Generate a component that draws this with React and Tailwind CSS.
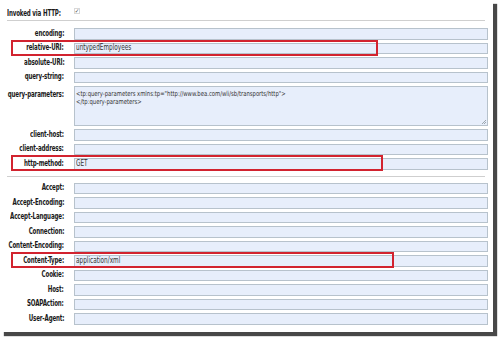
// Transport headers form: a scaled-down screenshot of an HTTP transport config page
const font = { fontFamily: '"DejaVu Sans Condensed", "Liberation Sans", sans-serif' };

const topFields = [
    { label: "encoding:" },
    { label: "relative-URI:", value: "untypedEmployees", mark: "w-[367px]" },
    { label: "absolute-URI:" },
    { label: "query-string:" },
];

const clientFields = [
    { label: "client-host:" },
    { label: "client-address:" },
    { label: "http-method:", value: "GET", mark: "w-[372px]" },
];

const headerFields = [
    { label: "Accept:" },
    { label: "Accept-Encoding:" },
    { label: "Accept-Language:" },
    { label: "Connection:" },
    { label: "Content-Encoding:" },
    { label: "Content-Type:", value: "application/xml", mark: "w-[383px]" },
    { label: "Cookie:" },
    { label: "Host:" },
    { label: "SOAPAction:" },
    { label: "User-Agent:" },
];

function Label({ children, className = "" }) {
    return (
        <div className={`w-[64px] shrink-0 flex justify-end ${className}`}>
            <span className="inline-block whitespace-nowrap origin-right scale-x-[0.77] text-[8px] font-bold text-[#1a1a1a] leading-none tracking-[-0.2px]">
                {children}
            </span>
        </div>
    );
}

function Field({ label, value, mark }) {
    return (
        <div className="relative flex items-center h-[11.5px]">
            <Label>{label}</Label>
            <div className="ml-[10px] flex-1 h-full bg-[#e7eefb] border border-[#b7c2cc] flex items-center pl-[1px] leading-none">
                <span className="inline-block whitespace-nowrap origin-left scale-x-[0.8] text-[8px] text-[#333]">{value}</span>
            </div>
            {mark && (
                <div className={`absolute left-[11px] top-[-3px] h-[16px] border-2 border-[#d2232f] ${mark}`} />
            )}
        </div>
    );
}

function Divider() {
    return <div className="ml-[7px] mr-[3px] h-px bg-[#cfcfcf]" />;
}

export default function App() {
    return (
        <div className="w-[500px] h-[339px] bg-white" style={font}>
            <div className="w-[493px] h-[332px] bg-white shadow-[4px_4px_1px_rgba(40,40,40,0.85)] pr-[5px] flex flex-col">
                <div className="flex items-center h-[20px] pt-[2px]">
                    <div className="pl-[7px] w-[74px] shrink-0">
                        <span className="inline-block whitespace-nowrap origin-left scale-x-[0.77] text-[8px] font-bold text-[#1a1a1a] leading-none tracking-[-0.2px]">Invoked via HTTP:</span>
                    </div>
                    <div className="w-[6px] h-[6px] border border-[#d8d8d8] flex items-center justify-center text-[6px] leading-none text-[#444]">✓</div>
                </div>
                <Divider />
                <div className="flex flex-col gap-[3px] mt-[7px]">
                    {topFields.map((f) => (
                        <Field key={f.label} {...f} />
                    ))}
                    <div className="flex h-[40px]">
                        <Label className="pt-[5px]">query-parameters:</Label>
                        <div className="relative ml-[10px] flex-1 bg-[#e7eefb] border border-[#b7c2cc] px-[1px] pt-[3px] leading-[8px] overflow-hidden">
                            <div className="origin-left scale-x-[0.84] text-[7px] text-[#333] whitespace-nowrap">
                                <div>{'<tp:query-parameters xmlns:tp="http://www.bea.com/wli/sb/transports/http">'}</div>
                                <div>{"</tp:query-parameters>"}</div>
                            </div>
                            <svg className="absolute right-[1px] bottom-[1px]" width="5" height="5" viewBox="0 0 5 5">
                                <path d="M5 1 L1 5 M5 3 L3 5" stroke="#8a949c" strokeWidth="0.8" />
                            </svg>
                        </div>
                    </div>
                    {clientFields.map((f) => (
                        <Field key={f.label} {...f} />
                    ))}
                </div>
                <div className="mt-[6px]">
                    <Divider />
                </div>
                <div className="flex flex-col gap-[3px] mt-[6px]">
                    {headerFields.map((f) => (
                        <Field key={f.label} {...f} />
                    ))}
                </div>
            </div>
        </div>
    );
}
